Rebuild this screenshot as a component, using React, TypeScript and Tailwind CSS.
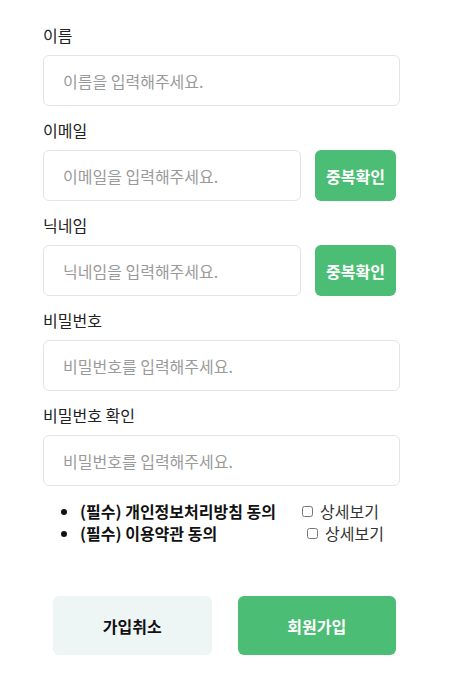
import React from 'react';

const font = { fontFamily: '"Noto Sans CJK KR", "Noto Sans", sans-serif' };

type FieldProps = {
  label: string;
  placeholder: string;
  type?: string;
  withCheck?: boolean;
};

const Field = ({ label, placeholder, type = 'text', withCheck }: FieldProps) => (
  <div className="mb-[14px]">
    <label className="block h-[20px] mb-[10px] text-[16px] leading-[20px] text-[#222]">{label}</label>
    <div className={`flex gap-[14px] ${withCheck ? 'mr-[4px]' : ''}`}>
      <input
        type={type}
        placeholder={placeholder}
        className="flex-1 min-w-0 h-[51px] px-[19px] rounded-[6px] border border-[#e1e4e8] text-[16px] text-[#333] placeholder:text-[#9a9a9a] outline-none"
      />
      {withCheck && (
        <button className="w-[81px] h-[51px] rounded-[6px] bg-[#4cbd74] text-white text-[16px] font-bold">
          중복확인
        </button>
      )}
    </div>
  </div>
);

const App: React.FC = () => {
  return (
    <div className="min-h-screen bg-white" style={font}>
      <div className="w-[357px] ml-[43px] pt-[25px]">
        <Field label="이름" placeholder="이름을 입력해주세요." />
        <Field label="이메일" placeholder="이메일을 입력해주세요." type="email" withCheck />
        <Field label="닉네임" placeholder="닉네임을 입력해주세요." withCheck />
        <Field label="비밀번호" placeholder="비밀번호를 입력해주세요." type="password" />
        <Field label="비밀번호 확인" placeholder="비밀번호를 입력해주세요." type="password" />

        <ul className="list-disc pl-[37px] text-[16px] leading-[22px] text-[#111]">
          <li>
            <div className="flex items-center">
              <span className="font-bold w-[222px]">(필수) 개인정보처리방침 동의</span>
              <input type="checkbox" className="w-[11px] h-[11px] m-0 mr-[7px]" />
              <span className="text-[#333]">상세보기</span>
            </div>
          </li>
          <li>
            <div className="flex items-center">
              <span className="font-bold w-[227px]">(필수) 이용약관 동의</span>
              <input type="checkbox" className="w-[11px] h-[11px] m-0 mr-[7px]" />
              <span className="text-[#333]">상세보기</span>
            </div>
          </li>
        </ul>

        <div className="flex gap-[26px] mt-[52px] pl-[10px] pr-[4px]">
          <button className="flex-1 h-[59px] rounded-[6px] bg-[#eef5f5] text-[16px] font-bold text-[#111]">
            가입취소
          </button>
          <button className="flex-1 h-[59px] rounded-[6px] bg-[#4cbd74] text-[16px] font-bold text-white">
            회원가입
          </button>
        </div>
      </div>
    </div>
  );
};

export default App;
